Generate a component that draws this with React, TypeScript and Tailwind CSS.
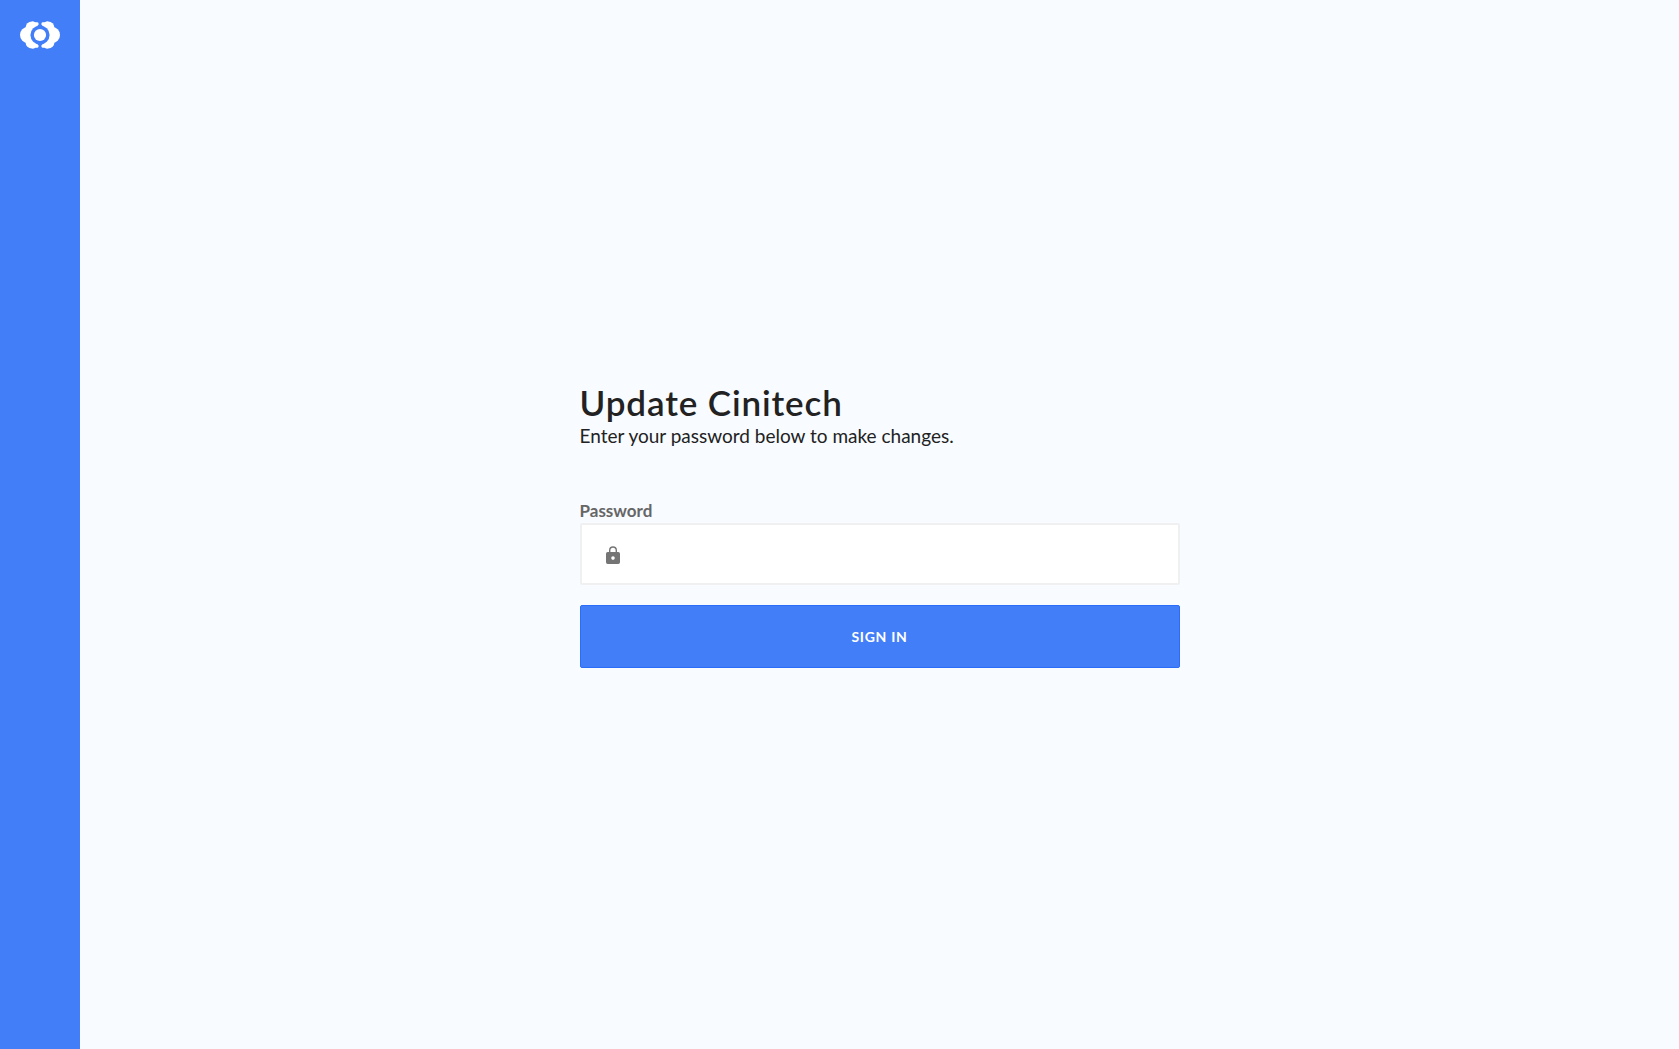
import React from "react";

function CloudLobes() {
  return (
    <g>
      <circle cx="8" cy="14" r="8" />
      <circle cx="11.8" cy="6.6" r="6.2" />
      <circle cx="11.8" cy="21.4" r="6.2" />
      <path d="M12 .4c1.6 0 2.700.4 3.400.9h1.100a1.700 1.700 0 0 1 .9 3.300L12 8ZM12 27.600c1.600 0 2.700-.4 3.400-.9h1.100a1.700 1.700 0 0 0 .9-3.300L12 20Z" />
    </g>
  );
}

function Logo() {
  return (
    <svg viewBox="0 0 40 28" className="h-7 w-10" fill="white" aria-hidden="true">
      <mask id="ring">
        <rect width="40" height="28" fill="white" />
        <circle cx="20" cy="14" r="9.6" fill="black" />
      </mask>
      <g mask="url(#ring)">
        <CloudLobes />
        <g transform="translate(40 0) scale(-1 1)">
          <CloudLobes />
        </g>
      </g>
      <circle cx="20" cy="14" r="6.1" />
    </svg>
  );
}

function LockIcon() {
  return (
    <svg viewBox="0 0 14 18" className="h-[18px] w-[14px]" aria-hidden="true">
      <path
        fill="#757575"
        fillRule="evenodd"
        d="M3 6V4.300a4 4 0 0 1 8 0V6h1.300A1.700 1.700 0 0 1 14 7.700v8.600a1.700 1.700 0 0 1-1.700 1.700H1.700A1.700 1.700 0 0 1 0 16.300V7.700A1.700 1.700 0 0 1 1.700 6H3Zm1.400 0h5.200V4.300a2.600 2.600 0 0 0-5.200 0V6ZM7 10.300a1.800 1.800 0 1 0 0 3.600 1.800 1.800 0 0 0 0-3.600Z"
      />
    </svg>
  );
}

export default function App() {
  return (
    <div className="flex min-h-screen bg-[#f8fbff] font-['Lato',sans-serif] text-[#222222]">
      <aside className="flex w-20 shrink-0 justify-center bg-[#437ef9] pt-[21px]">
        <a href="#" aria-label="Home" className="h-7">
          <Logo />
        </a>
      </aside>
      <main className="flex flex-1 items-center justify-center">
        <form className="w-full max-w-[600px]" onSubmit={(e) => e.preventDefault()}>
          <h1 className="text-[35px] leading-[42px] font-semibold tracking-wide">Update Cinitech</h1>
          <p className="text-[19px] leading-[26px]">Enter your password below to make changes.</p>
          <label htmlFor="password" className="mt-[50px] block text-[17px] leading-6 font-bold text-[#666666]">
            Password
          </label>
          <div className="relative">
            <input
              id="password"
              type="password"
              className="block h-[62px] w-full rounded-xs border-2 border-[#f0f0f0] bg-white pr-4 pl-14 outline-none"
            />
            <span className="pointer-events-none absolute top-[23px] left-[26px]">
              <LockIcon />
            </span>
          </div>
          <button
            type="submit"
            className="mt-5 h-[63px] w-full rounded-xs border border-[#2a6df8] bg-[#437ef9] text-sm font-bold tracking-wider text-white"
          >
            SIGN IN
          </button>
        </form>
      </main>
    </div>
  );
}
